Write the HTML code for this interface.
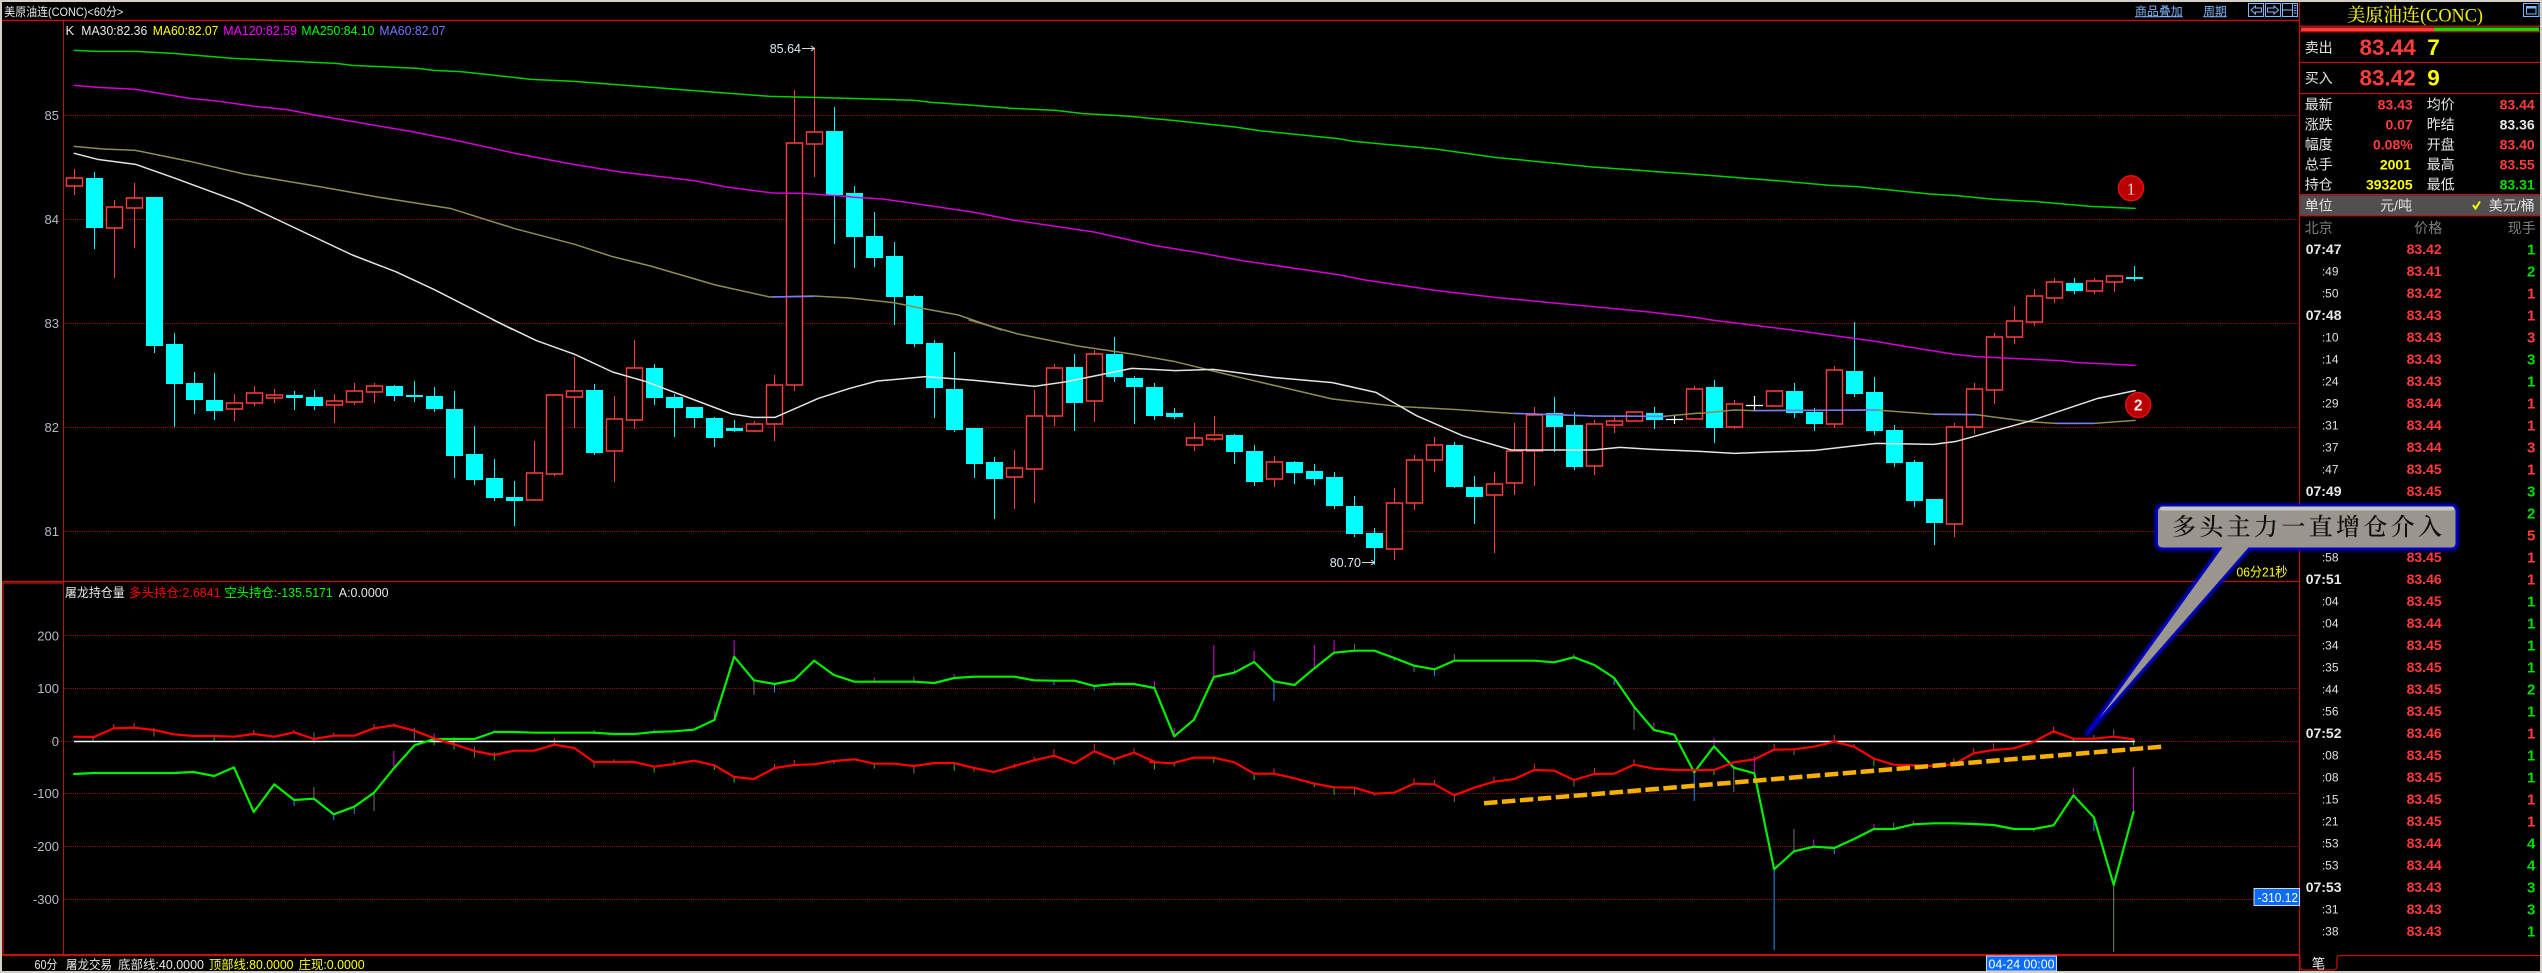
<!DOCTYPE html>
<html><head><meta charset="utf-8"><title>美原油连</title>
<style>
html,body{margin:0;padding:0;background:#000;width:2542px;height:973px;overflow:hidden}
svg{position:absolute;left:0;top:0;display:block}
text{font-family:"Liberation Sans","Noto Sans CJK SC",sans-serif;white-space:pre}
polyline,.np{vector-effect:non-scaling-stroke;fill:none}
.a{font-size:13px;fill:#b4bcc4;text-anchor:end}
.l{font-size:14px;fill:#e4e4e4}
.v{font-size:14px;font-weight:bold;text-anchor:end}
.r{fill:#ff3c3c}.w{fill:#e8e8e8}.y{fill:#ffff00}.g{fill:#00e000}
.t{font-size:14px;font-weight:bold;fill:#e8e8e8}
.s{font-size:12px;fill:#e0e0e0;text-anchor:end}
.p{font-size:14px;font-weight:bold;fill:#ff3c3c;text-anchor:end}
.q{font-size:15px;font-weight:bold;text-anchor:end}
.m{stroke-width:1.5;stroke-linejoin:round;stroke-linecap:round}
.f{stroke-width:2.2;stroke-linejoin:round;stroke-linecap:round}
.k{stroke-width:1;fill:none;vector-effect:non-scaling-stroke}
</style></head><body>
<svg width="2542" height="973" viewBox="0 0 2542 973" xmlns="http://www.w3.org/2000/svg">
<defs><filter id="b" x="-10%" y="-20%" width="120%" height="140%"><feGaussianBlur stdDeviation="1.6"/></filter></defs>
<rect width="2542" height="973" fill="#000"/>

<!-- grid -->
<g stroke="#a81414" stroke-width="1" stroke-dasharray="1 1.2" fill="none">
<path d="M64 115.5H2299M64 219.5H2299M64 323.5H2299M64 427.5H2299M64 531.5H2299M64 635.5H2299M64 688.5H2299M50 741.5H2299M64 793.5H2299M64 846.5H2299M64 899.5H2299"/>
</g>

<!-- frames -->
<g stroke="#c01010" fill="none">
<path d="M2 20.5H2299" stroke-width="1.5"/>
<path d="M63.5 20V955" stroke-width="1"/>
<path d="M2299.5 2V971" stroke-width="1.2"/>
<path d="M2 581.5H2299" stroke-width="1.2"/>
<path d="M2 583H63M3 583V955" stroke-width="1.3"/>
<path d="M2 955H2299" stroke-width="2.2"/>
<path d="M2300 26.2H2540M2300 31.7H2540M2300 62.5H2540M2300 93.5H2540M2300 194.5H2540M2300 215.7H2540" stroke-width="1.3"/>
<path d="M2300 955V966Q2300 970 2304 970H2333Q2337 970 2337 966V958Q2337 955.5 2340 955.5H2540" stroke-width="1.2"/>
</g>

<!-- candle wicks -->
<path fill="none" stroke="#ff3c3c" stroke-width="1" d="M74.5 169V195M114.5 200V278M134.5 183V248M234.5 394V421M254.5 386V406M274.5 389V403M334.5 394V423M354.5 383V405M374.5 383V403M534.5 441V501M554.5 394V476M574.5 357V428M614.5 396V482M634.5 340V429M754.5 421V432M774.5 375V441M794.5 90V391M814.5 48V177M1014.5 450V509M1034.5 390V503M1054.5 364V426M1094.5 350V422M1194.5 423V451M1214.5 416V441M1274.5 456V487M1394.5 488V560M1414.5 455V510M1434.5 437V472M1494.5 472V553M1514.5 423V495M1534.5 407V486M1594.5 420V475M1614.5 416V433M1634.5 411V421M1694.5 386V420M1734.5 400V429M1774.5 390V406M1834.5 366V428M1954.5 423V537M1974.5 383V434M1994.5 333V404M2014.5 306V344M2034.5 289V326M2054.5 278V303M2094.5 278V294M2114.5 276V292"/>
<path fill="none" stroke="#00ffff" stroke-width="1" d="M94.5 172V249M154.5 197V353M174.5 333V427M194.5 372V414M214.5 373V420M294.5 391V410M314.5 390V410M394.5 385V401M414.5 381V402M434.5 387V412M454.5 391V478M474.5 426V485M494.5 459V501M514.5 481V526M594.5 384V455M654.5 364V405M674.5 394V437M694.5 407V428M714.5 417V447M734.5 420V432M834.5 107V244M854.5 186V268M874.5 212V267M894.5 242V325M914.5 295V347M934.5 340V418M954.5 352V432M974.5 428V478M994.5 457V519M1074.5 354V431M1114.5 337V382M1134.5 376V424M1154.5 383V420M1174.5 408V419M1234.5 434V464M1254.5 445V486M1294.5 461V484M1314.5 464V485M1334.5 472V509M1354.5 496V537M1374.5 528V565M1454.5 442V488M1474.5 476V524M1554.5 397V452M1574.5 412V470M1654.5 407V429M1714.5 380V443M1794.5 383V418M1814.5 408V431M1854.5 322V397M1874.5 377V435M1894.5 425V467M1914.5 460V507M1934.5 499V545M2074.5 278V294M2134.5 266V281"/>
<!-- red bodies -->
<path fill="#000" stroke="#ff3c3c" stroke-width="1.4" d="M66.5 178h16v8h-16zM106.5 207h16v21h-16zM126.5 198h16v10h-16zM226.5 403h16v6h-16zM246.5 393h16v10h-16zM266.5 395h16v3h-16zM326.5 401h16v4h-16zM346.5 391h16v11h-16zM366.5 386h16v6h-16zM526.5 473h16v27h-16zM546.5 395h16v79h-16zM566.5 391h16v6h-16zM606.5 419h16v32h-16zM626.5 368h16v52h-16zM746.5 424h16v7h-16zM766.5 385h16v39h-16zM786.5 143h16v242h-16zM806.5 132h16v12h-16zM1006.5 468h16v9h-16zM1026.5 416h16v53h-16zM1046.5 368h16v48h-16zM1086.5 354h16v47h-16zM1186.5 438h16v7h-16zM1206.5 435h16v4h-16zM1266.5 462h16v17h-16zM1386.5 503h16v46h-16zM1406.5 460h16v43h-16zM1426.5 445h16v15h-16zM1486.5 484h16v11h-16zM1506.5 451h16v32h-16zM1526.5 415h16v36h-16zM1586.5 424h16v42h-16zM1606.5 421h16v4h-16zM1626.5 412h16v9h-16zM1686.5 389h16v30h-16zM1726.5 404h16v23h-16zM1766.5 391h16v15h-16zM1826.5 370h16v54h-16zM1946.5 427h16v97h-16zM1966.5 389h16v38h-16zM1986.5 337h16v53h-16zM2006.5 321h16v16h-16zM2026.5 296h16v26h-16zM2046.5 282h16v16h-16zM2086.5 281h16v10h-16zM2106.5 276h16v6h-16z"/>
<!-- cyan bodies -->
<path fill="#00ffff" d="M86 178h17v50h-17zM146 197h17v149h-17zM166 344h17v40h-17zM186 383h17v17h-17zM206 400h17v11h-17zM286 395h17v3h-17zM306 397h17v9h-17zM386 386h17v10h-17zM406 395h17v2h-17zM426 396h17v13h-17zM446 409h17v47h-17zM466 454h17v26h-17zM486 478h17v20h-17zM506 497h17v4h-17zM586 390h17v63h-17zM646 368h17v30h-17zM666 397h17v11h-17zM686 407h17v11h-17zM706 418h17v20h-17zM726 428h17v3h-17zM826 131h17v64h-17zM846 193h17v44h-17zM866 236h17v22h-17zM886 256h17v41h-17zM906 296h17v48h-17zM926 343h17v45h-17zM946 389h17v41h-17zM966 428h17v36h-17zM986 462h17v17h-17zM1066 367h17v36h-17zM1106 354h17v23h-17zM1126 378h17v9h-17zM1146 387h17v29h-17zM1166 413h17v4h-17zM1226 435h17v17h-17zM1246 451h17v31h-17zM1286 462h17v11h-17zM1306 471h17v8h-17zM1326 477h17v29h-17zM1346 506h17v28h-17zM1366 533h17v15h-17zM1446 445h17v42h-17zM1466 487h17v10h-17zM1546 413h17v14h-17zM1566 425h17v42h-17zM1646 413h17v7h-17zM1706 387h17v41h-17zM1786 391h17v22h-17zM1806 412h17v12h-17zM1846 371h17v23h-17zM1866 392h17v39h-17zM1886 430h17v33h-17zM1906 462h17v39h-17zM1926 499h17v24h-17zM2066 283h17v8h-17zM2126 277h17v2h-17z"/>
<!-- white doji -->
<path fill="none" stroke="#fff" stroke-width="1.2" d="M1674.5 415V424M1666 419.5H1683M1754.5 396V411M1746 405.5H1763"/>

<!-- MA lines -->
<g transform="scale(.54209,.33333)">
<polyline class="m" stroke="#00d000" points="137,151 180,154 250,154 320,160 430,175 540,184 620,190 650,196 770,205 800,211 850,215 980,238 1060,244 1170,258 1280,272 1420,289 1500,292 1568,295"/>
<polyline class="m" stroke="#d400d4" points="137,256 180,262 250,268 350,295 400,303 470,319 530,329 580,345 660,367 760,395 850,424 950,460 1050,491 1140,515 1280,542 1340,561 1425,579 1480,580 1568,590"/>
<polyline class="m" stroke="#8c8c55" points="137,439 190,447 250,451 350,484 450,522 600,563 700,592 830,625 950,686 1060,733 1130,770 1200,798 1320,855 1420,891 1500,888 1568,894"/>
<polyline class="m" stroke="#7878ff" points="1425,891 1500,889"/>
<polyline class="m" stroke="#e4e4e4" points="137,460 180,478 250,493 320,533 440,605 470,627 650,765 730,815 800,868 945,988"/>
</g>
<g transform="translate(850,0) scale(.54209,.33333)">
<polyline class="m" stroke="#00d000" points="0,295 120,301 150,307 220,315 300,325 380,331 430,341 510,348 600,362 710,381 760,393 900,416 930,424 1080,447 1190,472 1370,501 1480,514 1568,524"/>
<polyline class="m" stroke="#d400d4" points="0,591 60,597 130,613 230,637 300,660 450,696 560,736 640,757 720,781 900,824 950,840 1080,871 1190,892 1480,937 1568,954"/>
<polyline class="m" stroke="#8c8c55" points="0,894 80,908 130,924 200,945 280,990"/>
</g>
<g transform="translate(1700,0) scale(.38265,.33333)">
<polyline class="m" stroke="#00d000" points="0,524 90,532 190,541 340,556 410,560 600,582 670,587 770,598 880,605 1020,619 1137,625"/>
</g>
<g transform="translate(0,320) scale(.54209,.33333)">
<polyline class="m" stroke="#e4e4e4" points="910,0 990,62 1060,103 1130,156 1190,184 1350,282 1390,292 1430,292 1510,235 1568,205"/>
</g>
<g transform="translate(850,320) scale(.54209,.33333)">
<polyline class="m" stroke="#8c8c55" points="220,0 310,42 420,78 520,102 600,125 700,165 890,237 1010,259 1120,269 1220,280 1370,288 1500,289 1568,279"/>
<polyline class="m" stroke="#7878ff" points="1225,280 1370,288 1505,289"/>
<polyline class="m" stroke="#e4e4e4" points="0,205 50,183 140,170 230,181 340,199 400,185 520,145 600,152 670,148 780,172 890,188 970,217 1045,287 1130,347 1220,390 1370,390 1420,382 1480,388 1568,394"/>
</g>
<g transform="translate(1700,320) scale(.38265,.33333)">
<polyline class="m" stroke="#d400d4" points="0,-6 30,0 100,10 240,30 460,64 540,80 660,102 720,110 940,122 980,127 1137,136"/>
<polyline class="m" stroke="#8c8c55" points="0,280 90,270 140,272 460,270 600,282 720,284 860,305 930,310 1030,310 1137,301"/>
<polyline class="m" stroke="#7878ff" points="140,272 460,270"/>
<polyline class="m" stroke="#7878ff" points="610,283 720,284"/>
<polyline class="m" stroke="#7878ff" points="930,310 1030,310"/>
<polyline class="m" stroke="#e4e4e4" points="0,394 90,400 300,391 460,370 610,373 670,364 860,304 1040,235 1137,212"/>
</g>

<!-- lower panel spikes -->
<g transform="translate(0,640) scale(.73342,.33333)">
<path class="k" stroke="#e03030" d="M155 252V265M183 249V263M346 270V282M401 270V277M455 278V290M510 252V263M537 250V258M756 295V315M1056 372V384M1083 360V375M1383 370V384M1410 350V362M1437 327V345M1492 312V334M1546 325V338"/>
<path class="k" stroke="#707070" d="M210 263V290M127 290V303M428 277V310M565 263V300M647 320V353M810 366V383M837 358V366M1246 378V401M1328 384V395M510 458V513M428 441V476M1028 121V165M1246 110V125M810 270V278"/>
<path class="k" stroke="#00d000" d="M292 288V303M592 300V316M619 292V328M674 337V362M892 380V398M919 362V373M974 376V390M1001 411V428M1192 372V386M1301 369V392M1519 358V374"/>
<path class="k" stroke="#e000e0" d="M592 280V298M537 333V380M974 212V240M1001 0V50M1192 112V125M1301 102V114M1519 124V132M892 268V276M674 270V276"/>
<path class="k" stroke="#1e90ff" d="M455 523V540M483 500V522M401 480V498M1137 360V372M1056 132V158M1437 122V135M1492 138V152"/>
</g>
<g transform="translate(1150,640) scale(.73342,.33333)">
<path class="k" stroke="#e03030" d="M169 385V401M360 415V431M388 420V433M469 410V425M524 370V390M606 384V402M660 358V374M851 312V329M933 285V305M960 312V320M1096 355V373M1123 325V340M1150 310V330M1232 260V274"/>
<path class="k" stroke="#707070" d="M115 88V98M279 12V32M279 443V465M360 77V96M415 42V62M415 466V486M578 420V440M578 42V52M660 200V270M796 383V456M878 567V634M878 328V345M1014 548V567M1287 285V296M1314 268V290"/>
<path class="k" stroke="#6c8c6c" d="M1314 735V936"/>
<path class="k" stroke="#00d000" d="M6 366V388M33 366V380M87 353V368M142 401V420M224 431V441M251 443V465M306 461V467M769 390V405M987 356V378M1259 296V308M1341 298V316"/>
<path class="k" stroke="#e000e0" d="M6 123V144M33 264V289M87 15V111M142 33V66M224 15V85M251 0V38M687 247V270M769 294V319M824 348V400M905 598V620M987 552V567M1041 543V553M1259 444V466M1341 381V516"/>
<path class="k" stroke="#1e90ff" d="M169 124V183M333 54V63M388 88V108M633 114V135M742 397V483M851 688V930M933 624V642M1205 567V575M1287 532V573"/>
</g>

<!-- zero line -->
<path d="M74 741.5H2135" stroke="#fff" stroke-width="1.5" fill="none"/>

<!-- lower panel lines -->
<g transform="translate(0,640) scale(.73342,.33333)">
<polyline class="f" stroke="#00f000" points="101,402 128,399 155,399 183,399 210,399 237,399 264,396 292,408 319,382 346,516 374,433 401,480 428,476 455,523 483,500 510,458 537,385 565,316 592,297 619,297 647,297 674,276 701,276 728,278 756,278 783,278 810,278 837,282 865,282 892,276 919,274 946,269 974,240 1001,50 1028,121 1056,132 1083,120 1110,62 1137,105 1165,125 1192,125 1219,125 1246,125 1274,129 1301,114 1328,110 1355,110 1383,110 1410,121 1437,122 1465,122 1492,138 1519,132 1546,132 1574,144"/>
<polyline class="f" stroke="#ff0000" points="101,290 128,291 155,265 183,263 210,270 237,283 264,288 292,288 319,290 346,282 374,290 401,277 428,297 455,287 483,287 510,265 537,256 565,272 592,295 619,313 647,333 674,345 701,332 728,332 756,314 783,324 810,366 837,366 865,366 892,380 919,372 946,362 974,376 1001,411 1028,417 1056,384 1083,375 1110,373 1137,363 1165,358 1192,371 1219,371 1246,378 1274,369 1301,369 1328,384 1355,396 1383,378 1410,361 1437,347 1465,370 1492,334 1519,358 1546,338 1574,365"/>
</g>
<g transform="translate(1150,640) scale(.73342,.33333)">
<polyline class="f" stroke="#00f000" points="6,144 33,289 60,239 87,111 115,98 142,66 169,124 197,135 224,85 251,38 279,32 306,32 333,54 360,77 388,88 415,62 442,62 469,62 497,62 524,62 551,67 578,52 606,75 633,114 660,200 687,270 715,284 742,397 769,319 796,383 824,400 851,688 878,634 905,620 933,624 960,597 987,567 1014,567 1041,553 1069,550 1096,550 1123,552 1150,555 1178,567 1205,567 1232,556 1259,466 1287,532 1314,735 1341,516"/>
<polyline class="f" stroke="#ff0000" points="0,366 30,370 60,353 87,353 115,367 142,401 169,401 197,415 224,431 251,442 279,443 306,461 333,458 360,431 388,433 415,466 442,443 469,425 497,417 524,390 551,392 578,420 606,402 633,401 660,374 687,386 715,390 742,390 769,390 796,367 824,358 851,329 878,328 905,320 933,305 960,320 987,356 1014,374 1041,376 1069,378 1096,373 1123,340 1150,330 1178,325 1205,305 1232,274 1259,296 1287,296 1314,290 1341,298"/>
</g>

<!-- dashed trend -->
<path d="M1484 803.3L2162.5 746.7" stroke="#f8b000" stroke-width="4.5" stroke-dasharray="13.5 4.5" fill="none"/>

<!-- axis labels -->
<text class="a" x="59" y="120">85</text><text class="a" x="59" y="224">84</text><text class="a" x="59" y="328">83</text><text class="a" x="59" y="432">82</text><text class="a" x="59" y="536">81</text>
<text class="a" x="59" y="640.5">200</text><text class="a" x="59" y="693">100</text><text class="a" x="59" y="746">0</text><text class="a" x="59" y="798">-100</text><text class="a" x="59" y="851">-200</text><text class="a" x="59" y="904">-300</text>

<!-- header text -->
<text x="4.3" y="16" font-size="12" fill="#e8e8e8" textLength="119" lengthAdjust="spacingAndGlyphs">美原油连(CONC)&lt;60分&gt;</text>
<g font-size="13">
<text x="65.5" y="35" fill="#e8e8e8">K</text>
<text x="81.3" y="35" fill="#e8e8e8" textLength="66" lengthAdjust="spacingAndGlyphs">MA30:82.36</text>
<text x="152.8" y="35" fill="#ffff00" textLength="65.6" lengthAdjust="spacingAndGlyphs">MA60:82.07</text>
<text x="223.3" y="35" fill="#ff00ff" textLength="73.7" lengthAdjust="spacingAndGlyphs">MA120:82.59</text>
<text x="301.4" y="35" fill="#00ff00" textLength="73.1" lengthAdjust="spacingAndGlyphs">MA250:84.10</text>
<text x="379.4" y="35" fill="#7078ff" textLength="66.1" lengthAdjust="spacingAndGlyphs">MA60:82.07</text>
</g>
<text x="769.7" y="53" font-size="13" fill="#dce8f4" textLength="31.3" lengthAdjust="spacingAndGlyphs">85.64</text>
<path d="M802 48.5H814M811 46L814.5 48.5L811 51" stroke="#d8d8d8" fill="none"/>
<text x="1329.7" y="567" font-size="13" fill="#dce8f4" textLength="31.3" lengthAdjust="spacingAndGlyphs">80.70</text>
<path d="M1362 562.5H1374M1371 560L1374.5 562.5L1371 565" stroke="#d8d8d8" fill="none"/>

<!-- top right tools -->
<g fill="#80b8ff" font-size="12">
<text x="2135" y="15.5" textLength="47.7" lengthAdjust="spacingAndGlyphs">商品叠加</text>
<text x="2203.3" y="15.5" textLength="23.4" lengthAdjust="spacingAndGlyphs">周期</text>
</g>
<g stroke="#80b8ff" fill="none" stroke-width="1">
<path d="M2135 16.7H2182.7M2203.3 16.7H2226.7"/>
<rect x="2248.5" y="3.5" width="15" height="13"/>
<path d="M2251 10L2255.5 6V8H2261.5V12H2255.5V14Z"/>
<rect x="2265.5" y="3.5" width="15" height="13"/>
<path d="M2278.5 10L2274 6V8H2267.5V12H2274V14Z"/>
<rect x="2282.5" y="3.5" width="15" height="13"/>
<path d="M2282.5 10H2292.5M2292.5 3.5V16.5M2294 5.5H2296.5M2294 8H2296.5M2294 10.5H2296.5M2294 13H2296.5"/>
<rect x="2523.5" y="3.5" width="15.5" height="13"/>
<rect x="2526.5" y="6.5" width="9.5" height="7.5"/>
<path d="M2526.5 7.5H2536" stroke-width="2"/>
</g>

<!-- lower legend -->
<g font-size="12.5">
<text x="65" y="597" fill="#e8e8e8" textLength="59.7" lengthAdjust="spacingAndGlyphs">屠龙持仓量</text>
<text x="129" y="597" fill="#ff0000" textLength="91.6" lengthAdjust="spacingAndGlyphs">多头持仓:2.6841</text>
<text x="224.4" y="597" fill="#00ff00" textLength="108.4" lengthAdjust="spacingAndGlyphs">空头持仓:-135.5171</text>
<text x="338.8" y="597" fill="#e8e8e8" textLength="49.8" lengthAdjust="spacingAndGlyphs">A:0.0000</text>
<text x="34.5" y="969" fill="#e8e8e8" textLength="22.7" lengthAdjust="spacingAndGlyphs">60分</text>
<text x="66" y="969" fill="#e8e8e8" textLength="46" lengthAdjust="spacingAndGlyphs">屠龙交易</text>
<text x="118" y="969" fill="#e8e8e8" textLength="86" lengthAdjust="spacingAndGlyphs">底部线:40.0000</text>
<text x="209" y="969" fill="#ffff00" textLength="84.5" lengthAdjust="spacingAndGlyphs">顶部线:80.0000</text>
<text x="298.6" y="969" fill="#ffff00" textLength="66" lengthAdjust="spacingAndGlyphs">庄现:0.0000</text>
</g>
<rect x="1986.5" y="956" width="70" height="15" fill="#0a6cff" stroke="#fff" stroke-width=".8"/>
<text x="1988.5" y="968.5" font-size="13" fill="#fff" textLength="66" lengthAdjust="spacingAndGlyphs">04-24 00:00</text>
<rect x="2254" y="888.5" width="45.5" height="17" fill="#0a6cff" stroke="#fff" stroke-width=".8"/>
<text x="2257.5" y="902" font-size="13" fill="#fff" textLength="40.5" lengthAdjust="spacingAndGlyphs">-310.12</text>
<text x="2236.5" y="576.5" font-size="13" fill="#ffff00" textLength="51" lengthAdjust="spacingAndGlyphs">06分21秒</text>
<text x="2318.5" y="968.5" font-size="13.5" fill="#f0f0f0" text-anchor="middle">笔</text>

<!-- badges -->
<circle cx="2131" cy="188.3" r="12.5" fill="#b80000" stroke="#e01010" stroke-width="1.5"/>
<text x="2131" y="194.3" font-size="17" fill="#f0d8d8" text-anchor="middle" style="font-family:'Liberation Serif',serif">1</text>
<circle cx="2138.2" cy="405" r="12.5" fill="#b80000" stroke="#e01010" stroke-width="1.5"/>
<text x="2138.2" y="410.5" font-size="15.5" fill="#f4e8e8" font-weight="bold" text-anchor="middle">2</text>

<!-- right panel -->
<text x="2415" y="21.5" font-size="18.5" fill="#f0f000" text-anchor="middle" textLength="136" lengthAdjust="spacingAndGlyphs" style="font-family:'Liberation Serif','Noto Serif CJK SC',serif;font-weight:500">美原油连(CONC)</text>
<rect x="2301" y="27.5" width="133" height="3.5" fill="#ff3c3c"/>
<rect x="2434" y="27.5" width="105" height="3.5" fill="#00e000"/>
<rect x="2300" y="195.2" width="240" height="20" fill="#505050"/>

<text class="l" x="2304.7" y="52.5">卖出</text>
<text x="2359.5" y="55" font-size="22.5" font-weight="bold" class="r">83.44</text>
<text x="2427.3" y="55" font-size="22.5" font-weight="bold" class="y">7</text>
<text class="l" x="2304.7" y="83">买入</text>
<text x="2359.5" y="85.5" font-size="22.5" font-weight="bold" class="r">83.42</text>
<text x="2427.3" y="85.5" font-size="22.5" font-weight="bold" class="y">9</text>

<text class="l" x="2304.7" y="109.5">最新</text><text class="v r" x="2412.7" y="109.5">83.43</text><text class="l" x="2426.7" y="109.5">均价</text><text class="v r" x="2534.7" y="109.5">83.44</text>
<text class="l" x="2304.7" y="129.5">涨跌</text><text class="v r" x="2412.7" y="129.5">0.07</text><text class="l" x="2426.7" y="129.5">昨结</text><text class="v w" x="2534.7" y="129.5">83.36</text>
<text class="l" x="2304.7" y="149.5">幅度</text><text class="v r" x="2412.7" y="149.5">0.08%</text><text class="l" x="2426.7" y="149.5">开盘</text><text class="v r" x="2534.7" y="149.5">83.40</text>
<text class="l" x="2304.7" y="169.5">总手</text><text class="v y" x="2411" y="169.5">2001</text><text class="l" x="2426.7" y="169.5">最高</text><text class="v r" x="2534.7" y="169.5">83.55</text>
<text class="l" x="2304.7" y="189.5">持仓</text><text class="v y" x="2412.7" y="189.5">393205</text><text class="l" x="2426.7" y="189.5">最低</text><text class="v g" x="2534.7" y="189.5">83.31</text>

<text class="l" x="2304.7" y="210.5">单位</text>
<text class="l" x="2412" y="210.5" text-anchor="end">元/吨</text>
<path d="M2473 205L2475.5 208.5L2480 201.5" stroke="#ffff00" stroke-width="2" fill="none"/>
<text class="l" x="2534.7" y="210.5" text-anchor="end">美元/桶</text>

<g fill="#808080" font-size="14">
<text x="2304.7" y="233">北京</text><text x="2414.3" y="233">价格</text><text x="2507.8" y="233">现手</text>
</g>

<text class="t" x="2305.7" y="254">07:47</text><text class="p" x="2441.7" y="254">83.42</text><text class="q g" x="2535.3" y="254.5">1</text>
<text class="s" x="2338.5" y="275.5">:49</text><text class="p" x="2441.7" y="276">83.41</text><text class="q g" x="2535.3" y="276.5">2</text>
<text class="s" x="2338.5" y="297.5">:50</text><text class="p" x="2441.7" y="298">83.42</text><text class="q r" x="2535.3" y="298.5">1</text>
<text class="t" x="2305.7" y="320">07:48</text><text class="p" x="2441.7" y="320">83.43</text><text class="q r" x="2535.3" y="320.5">1</text>
<text class="s" x="2338.5" y="341.5">:10</text><text class="p" x="2441.7" y="342">83.43</text><text class="q r" x="2535.3" y="342.5">3</text>
<text class="s" x="2338.5" y="363.5">:14</text><text class="p" x="2441.7" y="364">83.43</text><text class="q g" x="2535.3" y="364.5">3</text>
<text class="s" x="2338.5" y="385.5">:24</text><text class="p" x="2441.7" y="386">83.43</text><text class="q g" x="2535.3" y="386.5">1</text>
<text class="s" x="2338.5" y="407.5">:29</text><text class="p" x="2441.7" y="408">83.44</text><text class="q r" x="2535.3" y="408.5">1</text>
<text class="s" x="2338.5" y="429.5">:31</text><text class="p" x="2441.7" y="430">83.44</text><text class="q r" x="2535.3" y="430.5">1</text>
<text class="s" x="2338.5" y="451.5">:37</text><text class="p" x="2441.7" y="452">83.44</text><text class="q r" x="2535.3" y="452.5">3</text>
<text class="s" x="2338.5" y="473.5">:47</text><text class="p" x="2441.7" y="474">83.45</text><text class="q r" x="2535.3" y="474.5">1</text>
<text class="t" x="2305.7" y="496">07:49</text><text class="p" x="2441.7" y="496">83.45</text><text class="q g" x="2535.3" y="496.5">3</text>
<text class="p" x="2441.7" y="518">83.45</text><text class="q g" x="2535.3" y="518.5">2</text>
<text class="p" x="2441.7" y="540">83.45</text><text class="q r" x="2535.3" y="540.5">5</text>
<text class="s" x="2338.5" y="561.5">:58</text><text class="p" x="2441.7" y="562">83.45</text><text class="q r" x="2535.3" y="562.5">1</text>
<text class="t" x="2305.7" y="584">07:51</text><text class="p" x="2441.7" y="584">83.46</text><text class="q r" x="2535.3" y="584.5">1</text>
<text class="s" x="2338.5" y="605.5">:04</text><text class="p" x="2441.7" y="606">83.45</text><text class="q g" x="2535.3" y="606.5">1</text>
<text class="s" x="2338.5" y="627.5">:04</text><text class="p" x="2441.7" y="628">83.44</text><text class="q g" x="2535.3" y="628.5">1</text>
<text class="s" x="2338.5" y="649.5">:34</text><text class="p" x="2441.7" y="650">83.45</text><text class="q g" x="2535.3" y="650.5">1</text>
<text class="s" x="2338.5" y="671.5">:35</text><text class="p" x="2441.7" y="672">83.45</text><text class="q g" x="2535.3" y="672.5">1</text>
<text class="s" x="2338.5" y="693.5">:44</text><text class="p" x="2441.7" y="694">83.45</text><text class="q g" x="2535.3" y="694.5">2</text>
<text class="s" x="2338.5" y="715.5">:56</text><text class="p" x="2441.7" y="716">83.45</text><text class="q g" x="2535.3" y="716.5">1</text>
<text class="t" x="2305.7" y="738">07:52</text><text class="p" x="2441.7" y="738">83.46</text><text class="q r" x="2535.3" y="738.5">1</text>
<text class="s" x="2338.5" y="759.5">:08</text><text class="p" x="2441.7" y="760">83.45</text><text class="q g" x="2535.3" y="760.5">1</text>
<text class="s" x="2338.5" y="781.5">:08</text><text class="p" x="2441.7" y="782">83.45</text><text class="q g" x="2535.3" y="782.5">1</text>
<text class="s" x="2338.5" y="803.5">:15</text><text class="p" x="2441.7" y="804">83.45</text><text class="q r" x="2535.3" y="804.5">1</text>
<text class="s" x="2338.5" y="825.5">:21</text><text class="p" x="2441.7" y="826">83.45</text><text class="q r" x="2535.3" y="826.5">1</text>
<text class="s" x="2338.5" y="847.5">:53</text><text class="p" x="2441.7" y="848">83.44</text><text class="q g" x="2535.3" y="848.5">4</text>
<text class="s" x="2338.5" y="869.5">:53</text><text class="p" x="2441.7" y="870">83.44</text><text class="q g" x="2535.3" y="870.5">4</text>
<text class="t" x="2305.7" y="892">07:53</text><text class="p" x="2441.7" y="892">83.43</text><text class="q g" x="2535.3" y="892.5">3</text>
<text class="s" x="2338.5" y="913.5">:31</text><text class="p" x="2441.7" y="914">83.43</text><text class="q g" x="2535.3" y="914.5">3</text>
<text class="s" x="2338.5" y="935.5">:38</text><text class="p" x="2441.7" y="936">83.43</text><text class="q g" x="2535.3" y="936.5">1</text>

<!-- callout -->
<path d="M2163 506H2451Q2456.5 506 2456.5 511.5V543Q2456.5 548.5 2451 548.5H2249L2086 735L2220.5 548.5H2163Q2157 548.5 2157 543V511.5Q2157 506 2163 506Z" fill="#0000ff" stroke="#0000e0" stroke-width="4" filter="url(#b)"/>
<path d="M2163 506H2451Q2456.5 506 2456.5 511.5V543Q2456.5 548.5 2451 548.5H2249L2086 735L2220.5 548.5H2163Q2157 548.5 2157 543V511.5Q2157 506 2163 506Z" fill="#9a968e" stroke="#0000c0" stroke-width="2"/>
<path d="M2162 508.5H2452" stroke="#c8c6c0" stroke-width="4" stroke-linecap="round" fill="none"/>
<text x="2172" y="535" font-size="24" font-weight="500" fill="#0c0c0c" textLength="270" lengthAdjust="spacing" style="font-family:'Noto Serif CJK SC','Liberation Serif',serif">多头主力一直增仓介入</text>

<!-- window edges -->
<rect x="0" y="0" width="2542" height="2" fill="#d4d0c8"/>
<rect x="0" y="0" width="2" height="973" fill="#d4d0c8"/>
<rect x="0" y="971" width="2542" height="2" fill="#d4d0c8"/>
<rect x="2540" y="0" width="2" height="973" fill="#d4d0c8"/>
</svg>
</body></html>
